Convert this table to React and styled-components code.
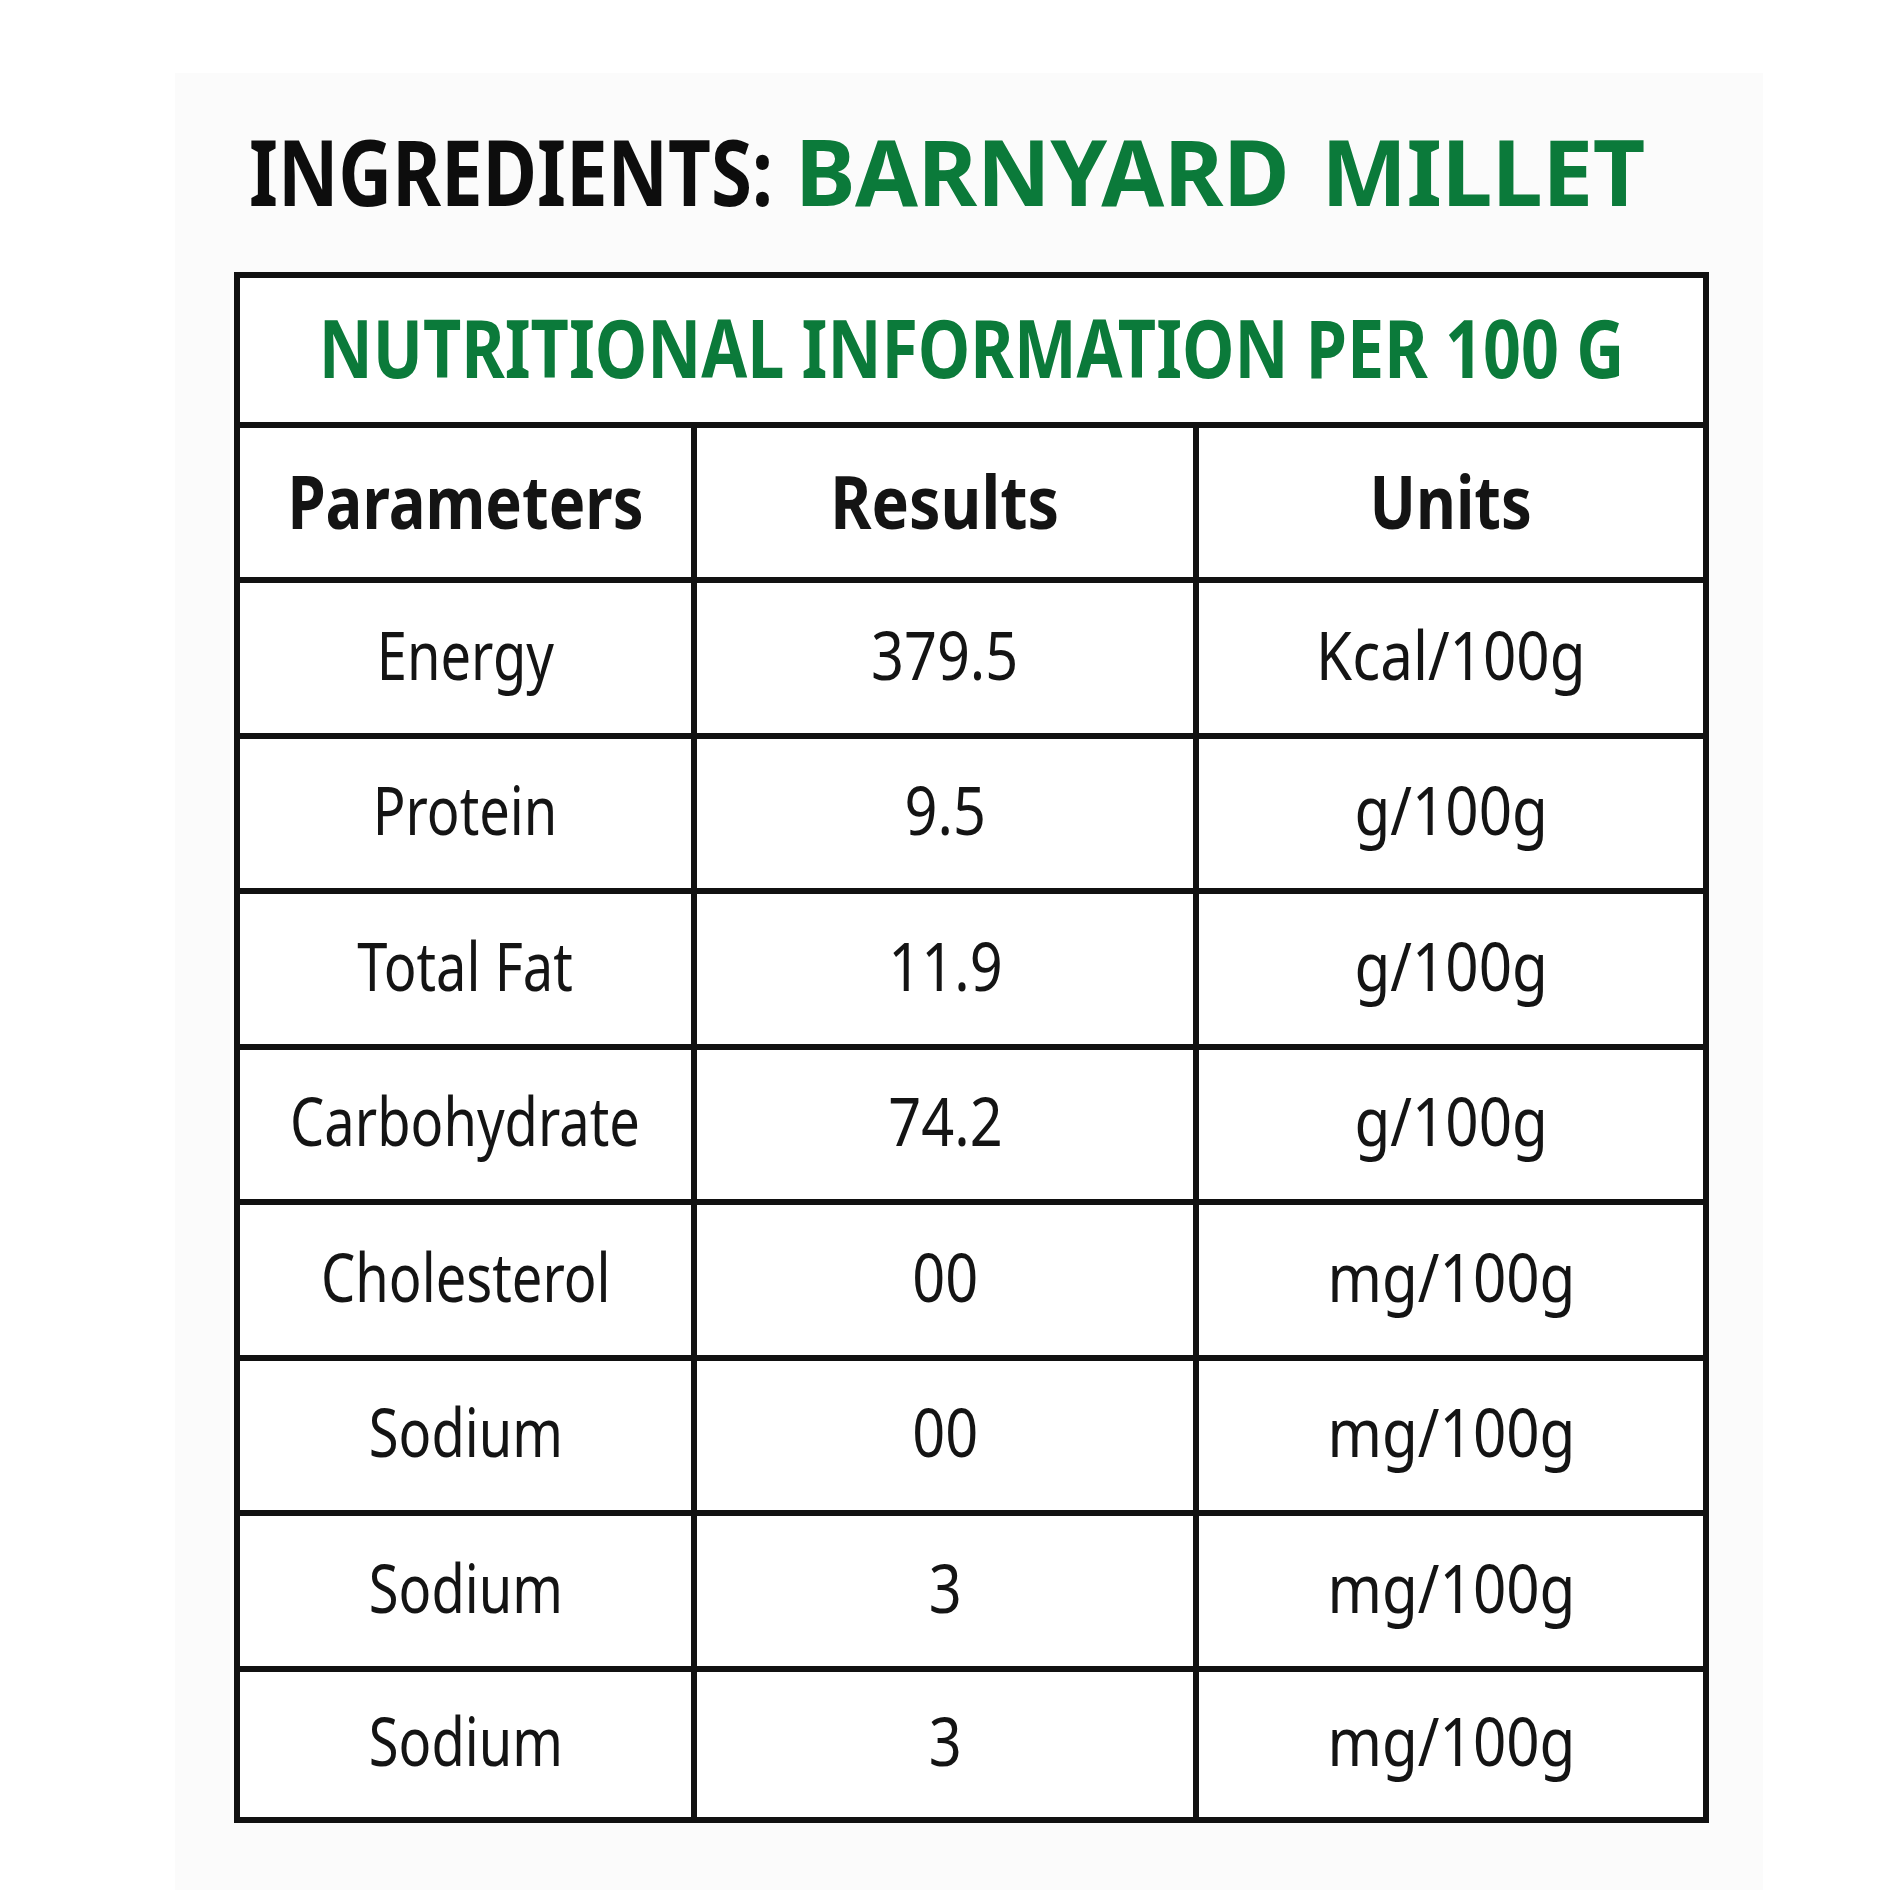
import React from 'react';
import styled, { createGlobalStyle } from 'styled-components';

const GlobalStyle = createGlobalStyle`
	html, body {
		margin: 0;
		padding: 0;
		background: #ffffff;
	}
	body {
		font-family: "Noto Sans", "DejaVu Sans", sans-serif;
		color: #141414;
	}
`;

const Page = styled.div`
	width: 1890px;
	height: 1890px;
	box-sizing: border-box;
	padding: 73px 127px 0 175px;
	overflow: hidden;
`;

const Panel = styled.section`
	height: 100%;
	background: #fbfbfb;
	padding-top: 53px;
	box-sizing: border-box;
`;

const Title = styled.h1`
	display: flex;
	align-items: baseline;
	gap: 22px;
	margin: 0 0 55px 74px;
	font-size: 91px;
	line-height: 91px;
	font-weight: 700;
	color: #0d0d0d;
	white-space: nowrap;
`;

// the label face in the picture is narrower than any installed font
const Narrow = styled.span`
	display: inline-block;
	white-space: nowrap;
	transform: scaleX(${(p) => p.$k});
	transform-origin: ${(p) => (p.$left ? 'left center' : 'center')};
	margin-right: ${(p) => p.$trim || 0}px;
`;

const Green = styled.span`
	color: #0b7a3a;
	word-spacing: 9px;
	letter-spacing: -0.5px;
`;

const Table = styled.table`
	margin-left: 59px;
	border-collapse: collapse;
	table-layout: fixed;
	width: 1469px;
	background: #fff;
`;

const Row = styled.tr`
	height: ${(p) => p.$h}px;
`;

const Cell = styled.td`
	border: 6px solid #111;
	padding: 0;
	vertical-align: middle;
	color: ${(p) => (p.$green ? '#0b7a3a' : '#141414')};
	font-size: ${(p) => p.$size}px;
	font-weight: ${(p) => (p.$bold ? 700 : 400)};
	line-height: 1;
`;

const Center = styled.div`
	display: flex;
	justify-content: center;
	align-items: center;
	margin-top: ${(p) => p.$nudge || 0}px;
`;

const rows = [
	['Energy', '379.5', 'Kcal/100g'],
	['Protein', '9.5', 'g/100g'],
	['Total Fat', '11.9', 'g/100g'],
	['Carbohydrate', '74.2', 'g/100g'],
	['Cholesterol', '00', 'mg/100g'],
	['Sodium', '00', 'mg/100g'],
	['Sodium', '3', 'mg/100g'],
	['Sodium', '3', 'mg/100g'],
];

const colScale = [0.81, 0.86, 0.87];

function TextCell({ children, k, size, bold, green, nudge, span }) {
	return (
		<Cell $size={size} $bold={bold} $green={green} colSpan={span}>
			<Center $nudge={nudge}>
				<Narrow $k={k}>{children}</Narrow>
			</Center>
		</Cell>
	);
}

export default function App() {
	return (
		<>
			<GlobalStyle />
			<Page>
				<Panel>
					<Title>
						<Narrow $k={0.817} $left $trim={-117}>INGREDIENTS:</Narrow>
						<Green>BARNYARD MILLET</Green>
					</Title>
					<Table>
						<colgroup>
							<col style={{ width: 457 }} />
							<col style={{ width: 502 }} />
							<col style={{ width: 510 }} />
						</colgroup>
						<tbody>
							<Row $h={150}>
								<TextCell span={3} k={0.83} size={80} bold green nudge={-6}>
									NUTRITIONAL INFORMATION PER 100 G
								</TextCell>
							</Row>
							<Row $h={155}>
								<TextCell k={0.83} size={74} bold nudge={-4}>Parameters</TextCell>
								<TextCell k={0.85} size={74} bold nudge={-4}>Results</TextCell>
								<TextCell k={0.83} size={74} bold nudge={-4}>Units</TextCell>
							</Row>
							{rows.map((r, i) => (
								<Row key={i} $h={i === rows.length - 1 ? 151 : 155.5}>
									{r.map((txt, c) => (
										<TextCell key={c} k={colScale[c]} size={67} nudge={-7}>
											{txt}
										</TextCell>
									))}
								</Row>
							))}
						</tbody>
					</Table>
				</Panel>
			</Page>
		</>
	);
}
